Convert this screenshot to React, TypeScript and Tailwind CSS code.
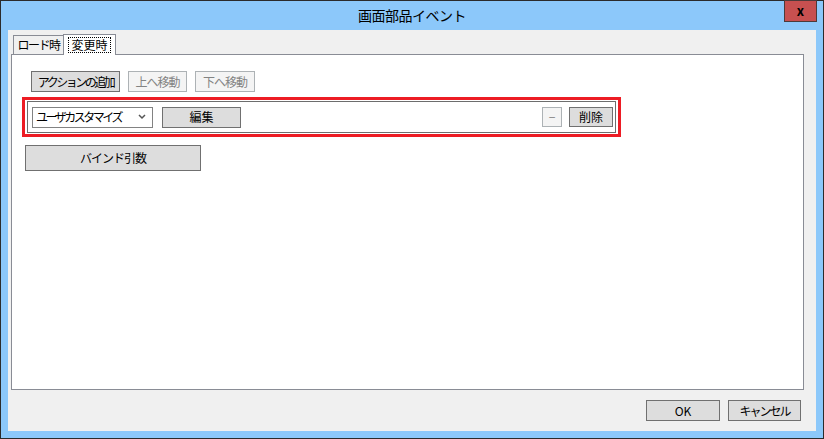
import React from "react";

const font = {
  fontFamily: '"Noto Sans CJK JP", "Noto Sans", sans-serif',
};

function Btn({
  label,
  className = "",
  disabled = false,
}: {
  label: string;
  className?: string;
  disabled?: boolean;
}) {
  return (
    <div
      className={`flex items-center justify-center whitespace-nowrap text-[12px] leading-none border ${
        disabled
          ? "bg-[#f4f4f4] border-[#adb2b5] text-[#838383]"
          : "bg-[#dddddd] border-[#707070] text-black"
      } ${className}`}
    >
      {label}
    </div>
  );
}

export default function App() {
  return (
    <div
      className="relative w-[824px] h-[439px] border border-[#2b2b2b] bg-[#8cc8fa] flex flex-col"
      style={font}
    >
      {/* タイトルバー */}
      <div className="h-[29px] flex items-center justify-center text-[14px] tracking-[-0.5px] text-black">
        画面部品イベント
      </div>
      <div className="absolute top-[-1px] right-[6px] w-[33px] h-[22px] bg-[#c75050] border border-[#4d3a3a] flex items-center justify-center">
        <span className="text-[13px] font-bold leading-none text-black -mt-[2px]">x</span>
      </div>

      {/* クライアント領域 */}
      <div className="flex-1 mx-[7px] mb-[7px] bg-[#f0f0f0] flex flex-col px-[3px] pt-[4px]">
        {/* タブ */}
        <div className="flex items-end ml-[2px] h-[20px]">
          <div className="w-[51px] h-[19px] border border-b-0 border-[#898c95] bg-[#f0f0f0] flex items-center justify-center text-[12px] leading-none tracking-[-1.5px] whitespace-nowrap">
            ロード時
          </div>
          <div className="relative z-10 -ml-px -mb-px w-[53px] h-[21px] border border-b-0 border-[#898c95] bg-white flex items-center justify-center">
            <span className="border border-dotted border-black px-[2px] text-[12px] leading-[14px] whitespace-nowrap">
              変更時
            </span>
          </div>
        </div>

        {/* パネル */}
        <div className="w-[793px] h-[336px] border border-[#898c95] bg-white flex flex-col">
          <div className="flex gap-[8px] mt-[16px] ml-[19px]">
            <Btn label="アクションの追加" className="w-[89px] h-[21px] tracking-[-2.5px]" />
            <Btn label="上へ移動" className="w-[59px] h-[21px] tracking-[-1px]" disabled />
            <Btn label="下へ移動" className="w-[60px] h-[21px] tracking-[-1px]" disabled />
          </div>

          <div className="mt-[5px] ml-[10px] w-[599px] h-[40px] border-[3px] border-[#ed1c24] px-[2px] py-[1px]">
            <div className="h-full border border-[#6d6d6d] flex items-center pr-[2px]">
              <div className="ml-[4px] w-[121px] h-[21px] border border-[#828282] bg-white flex items-center justify-between pl-[3px] pr-[6px] text-[12px] leading-none">
                <span className="whitespace-nowrap tracking-[-2.5px]">ユーザカスタマイズ</span>
                <svg width="8" height="6" viewBox="0 0 8 6">
                  <path d="M1 1 L4 4 L7 1" stroke="#555" strokeWidth="1.5" fill="none" />
                </svg>
              </div>
              <Btn label="編集" className="ml-[9px] w-[79px] h-[21px]" />
              <div className="flex-1" />
              <Btn label="−" className="w-[20px] h-[20px]" disabled />
              <Btn label="削除" className="ml-[7px] w-[44px] h-[20px]" />
            </div>
          </div>

          <Btn label="バインド引数" className="mt-[8px] ml-[13px] w-[176px] h-[26px] tracking-[-1px]" />
        </div>

        {/* フッター */}
        <div className="flex justify-end gap-[8px] mt-[10px] pr-[12px]">
          <Btn label="OK" className="w-[74px] h-[21px]" />
          <Btn label="キャンセル" className="w-[73px] h-[21px] tracking-[-2px]" />
        </div>
      </div>
    </div>
  );
}
